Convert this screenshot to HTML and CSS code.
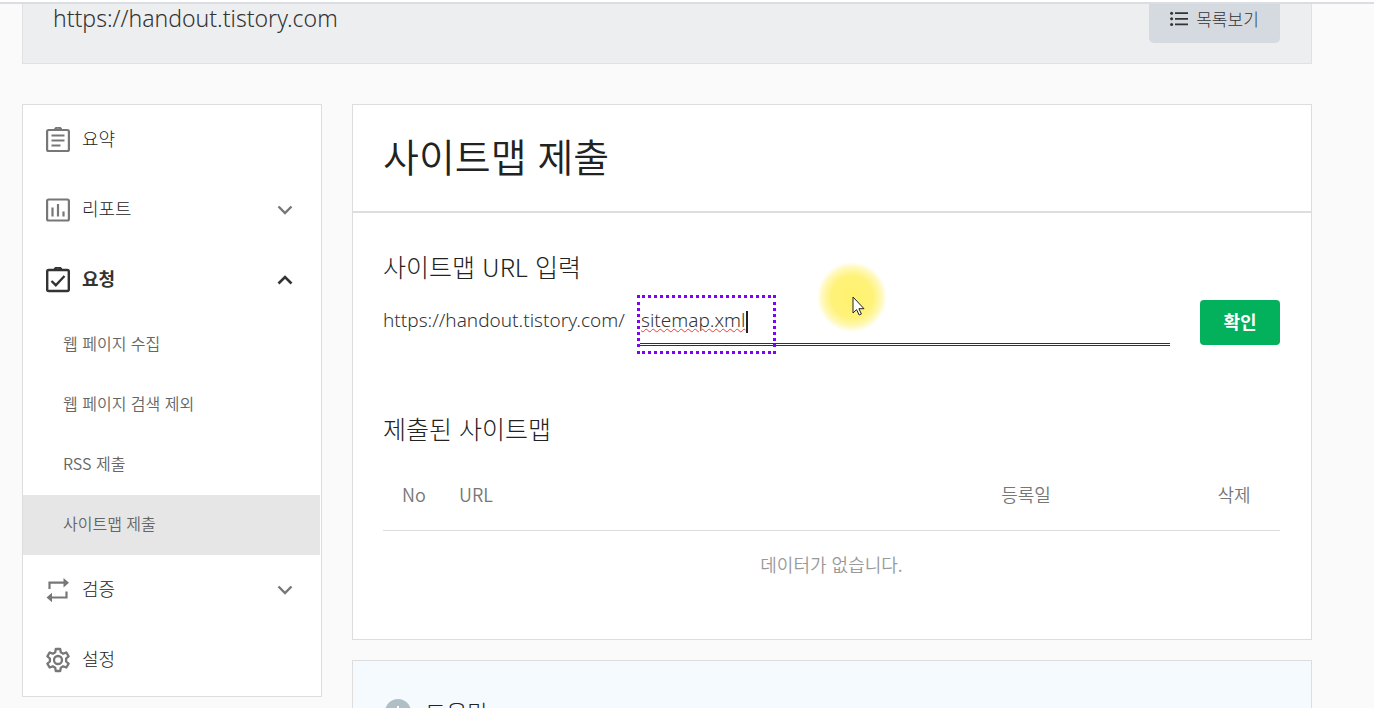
FILE: index.html
```html
<!DOCTYPE html>
<html lang="ko">
<head>
<meta charset="utf-8">
<title>사이트맵 제출</title>
<link rel="stylesheet" href="styles.css">
</head>
<body>
<div class="topline"></div>
<header class="site-bar">
  <p class="site-url">https://handout.tistory.com</p>
  <button type="button" class="list-btn">
    <svg width="18" height="16" viewBox="0 0 18 16" fill="#333"><circle cx="1.6" cy="2.2" r="1.5"/><circle cx="1.6" cy="7.8" r="1.5"/><circle cx="1.6" cy="13.4" r="1.5"/><path d="M5 1.3h13v1.8H5zM5 6.9h13v1.8H5zM5 12.5h13v1.8H5z"/></svg>
    <span>목록보기</span>
  </button>
</header>
<div class="layout">
  <nav class="side">
    <a href="#" class="item">
      <svg class="icon" viewBox="0 0 24 26" fill="none" stroke="#777" stroke-width="2.2"><rect x="1.1" y="3" width="21.8" height="21" rx="1.5"/><path d="M8.8 3a3.2 2.4 0 0 1 6.4 0"/><path d="M5.5 8.5h13M5.5 13.5h13M5.5 18.5h9"/></svg>
      <span class="label">요약</span>
    </a>
    <a href="#" class="item">
      <svg class="icon" viewBox="0 0 24 26" fill="none" stroke="#777" stroke-width="2.2"><rect x="1.1" y="2.5" width="21.8" height="21" rx="1.5"/><path d="M6.5 10.5v9M12 7V19.5M17.5 14.5v5"/></svg>
      <span class="label">리포트</span>
      <svg class="chev" viewBox="0 0 16 10" fill="none" stroke="#777" stroke-width="2.4"><path d="M1.5 1.5 8 8l6.500-6.500"/></svg>
    </a>
    <a href="#" class="item open">
      <svg class="icon" viewBox="0 0 24 26" fill="none" stroke="#333" stroke-width="2.4"><rect x="1.2" y="3" width="21.6" height="21" rx="1.5"/><path d="M8.8 3a3.2 2.4 0 0 1 6.4 0"/><path d="m5.5 14 4.3 4.2L18.5 9"/></svg>
      <span class="label">요청</span>
      <svg class="chev" viewBox="0 0 16 10" fill="none" stroke="#333" stroke-width="2.6"><path d="M1.5 8.5 8 2l6.500 6.500"/></svg>
    </a>
    <a href="#" class="sub">웹 페이지 수집</a>
    <a href="#" class="sub">웹 페이지 검색 제외</a>
    <a href="#" class="sub">RSS 제출</a>
    <a href="#" class="sub active">사이트맵 제출</a>
    <a href="#" class="item">
      <svg class="icon" viewBox="0 0 24 26" fill="none" stroke="#777" stroke-width="2.2"><path d="M3.5 12V5.7H18M20.5 14.5v6H5"/><path d="M17.5 1 23 5.7l-5.5 4.700zM6 15.8.5 20.5 6 25.2z" fill="#777" stroke="none"/></svg>
      <span class="label">검증</span>
      <svg class="chev" viewBox="0 0 16 10" fill="none" stroke="#777" stroke-width="2.4"><path d="M1.5 1.5 8 8l6.500-6.500"/></svg>
    </a>
    <a href="#" class="item">
      <svg class="icon" viewBox="0 0 24 26" fill="none" stroke="#777" stroke-width="2.3" stroke-linejoin="round"><circle cx="12" cy="13" r="4"/><path d="M9.800 2h4.400l.6 3.300 2.400 1.400 3.200-1.200 2.200 3.800-2.500 2.200v3l2.500 2.200-2.200 3.800-3.200-1.200-2.400 1.400-.6 3.300H9.800l-.6-3.300-2.400-1.400-3.200 1.200-2.200-3.800 2.500-2.200v-3L1.400 9.300l2.200-3.800 3.200 1.200 2.400-1.400z"/></svg>
      <span class="label">설정</span>
    </a>
  </nav>
  <main class="main">
    <section class="panel">
      <h1 class="title">사이트맵 제출</h1>
      <div class="body">
        <h2 class="heading"><label for="path">사이트맵 URL 입력</label></h2>
        <form class="row">
          <span class="prefix">https://handout.tistory.com/</span>
          <div class="field">
            <input id="path" class="path" type="text" value="sitemap.xml">
            <span class="caret"></span>
            <span class="marquee"></span>
            <span class="spot"></span>
            <svg class="pointer" width="13" height="20" viewBox="0 0 13 20"><path d="M1 1v16l3.600-3.400 2.600 5.400 2.200-1-2.500-5.300H12z" fill="#fff" stroke="#222"/></svg>
          </div>
          <button type="button" class="confirm">확인</button>
        </form>
        <h2 class="heading">제출된 사이트맵</h2>
        <table class="list">
          <thead><tr><th class="no">No</th><th class="url">URL</th><th class="date">등록일</th><th class="del">삭제</th></tr></thead>
          <tbody><tr><td colspan="4">데이터가 없습니다.</td></tr></tbody>
        </table>
      </div>
    </section>
    <section class="panel help">
      <svg width="26" height="26" viewBox="0 0 26 26"><circle cx="13" cy="13" r="13" fill="#b0bec5"/><path d="M13 7v12M7 13h12" stroke="#fff" stroke-width="2"/></svg>
      <h2 class="help-title">도움말</h2>
    </section>
  </main>
</div>
</body>
</html>
```
FILE: styles.css
```css
* { box-sizing: border-box; }
body {
  margin: 0;
  height: 100vh;
  overflow: hidden;
  background: #fafafa;
  color: #222;
  font-family: "Noto Sans CJK KR", sans-serif;
  font-size: 18px;
  font-weight: 300;
}
h1, h2, p { margin: 0; font-weight: 300; }
a { color: inherit; text-decoration: none; }
button, input { font: inherit; border: 0; margin: 0; }
.topline { height: 4px; border-bottom: 2px solid #dadde1; background: #fff; }
.site-bar {
  display: flex;
  justify-content: space-between;
  align-items: flex-start;
  margin: 0 62px 0 22px;
  padding: 0 31px 20px 30px;
  border: 1px solid #dfe1e3;
  border-top: 0;
  background: #edeef0;
}
.site-url {
  color: #333;
  font-family: "Noto Sans", sans-serif;
  font-size: 23px;
  line-height: 28px;
}
.list-btn {
  display: flex;
  align-items: center;
  justify-content: center;
  gap: 8px;
  width: 131px;
  height: 39px;
  padding: 0 0 10px;
  border-radius: 0 0 5px 5px;
  background: #d4dae0;
  color: #333;
  font-size: 17px;
}
.layout {
  display: flex;
  align-items: flex-start;
  gap: 30px;
  margin: 40px 62px 0 22px;
}
.side {
  flex: 0 0 300px;
  padding-bottom: 1px;
  border: 1px solid #ddd;
  background: #fff;
}
.item {
  display: flex;
  align-items: center;
  height: 70px;
  padding: 0 28px 0 23px;
  color: #222;
}
.icon { width: 24px; height: 26px; margin-right: 12px; }
.label { flex: 1; line-height: 26px; padding-bottom: 4px; }
.open .label { color: #333; font-weight: 700; }
.chev { width: 16px; height: 10px; }
.sub {
  display: flex;
  align-items: center;
  height: 60px;
  margin-right: 1px;
  padding: 0 40px 4px;
  color: #666;
  font-size: 16px;
  font-weight: 350;
}
.active { background: #e6e6e6; }
.main { flex: 1; min-width: 0; }
.panel { border: 1px solid #ddd; background: #fff; }
.title {
  padding: 20px 30px 26px;
  border-bottom: 2px solid #ddd;
  font-size: 39px;
  font-weight: 350;
  line-height: 60px;
}
.body { padding: 35px 31px 41px 30px; }
.heading { font-size: 25px; line-height: 36px; }
.row { display: flex; align-items: flex-start; margin: 3px 0 64px; }
.prefix, .path { font-family: "Noto Sans", sans-serif; font-size: 19px; line-height: 26px; }
.prefix { width: 257px; padding-top: 20px; white-space: nowrap; color: #333; }
.field { position: relative; flex: 1; margin-right: 30px; }
.path {
  display: block;
  width: 100%;
  height: 59px;
  padding: 11px 1px 1px;
  border-bottom: 3px double #333;
  background: transparent;
  color: #333;
  outline: 0;
  text-decoration: underline wavy #f33 1px;
}
.caret { position: absolute; left: 106px; top: 24px; width: 2px; height: 22px; background: #222; }
.marquee {
  position: absolute;
  left: -3px;
  top: 8px;
  width: 139px;
  height: 59px;
  border: 3px dotted #8000ff;
}
.spot {
  position: absolute;
  left: 177px;
  top: -25px;
  width: 70px;
  height: 70px;
  border-radius: 50%;
  background: radial-gradient(circle closest-side, #fff26e 0%, #fff27a 60%, #fff9bb 85%, transparent 100%);
}
.pointer { position: absolute; left: 212px; top: 9px; }
.confirm {
  width: 80px;
  height: 45px;
  margin-top: 13px;
  padding: 0 0 3px;
  border-radius: 4px;
  background: #03b05b;
  color: #fff;
  font-weight: 700;
}
.list { width: 100%; margin-top: 13px; border-collapse: collapse; table-layout: fixed; color: #777; }
.list th { height: 71px; padding: 0 0 1px; border-bottom: 1px solid #ddd; font-weight: 350; }
.list .no { width: 62px; }
.list .url { text-align: left; padding-left: 14px; }
.list .date { width: 324px; }
.list .del { width: 92px; }
.list td { height: 68px; padding: 0 0 1px; text-align: center; color: #999; font-weight: 350; }
.help {
  display: flex;
  align-items: center;
  gap: 14px;
  margin-top: 20px;
  padding: 33px 32px;
  background: #f5faff;
}
.help-title { font-size: 23px; line-height: 36px; }
```
